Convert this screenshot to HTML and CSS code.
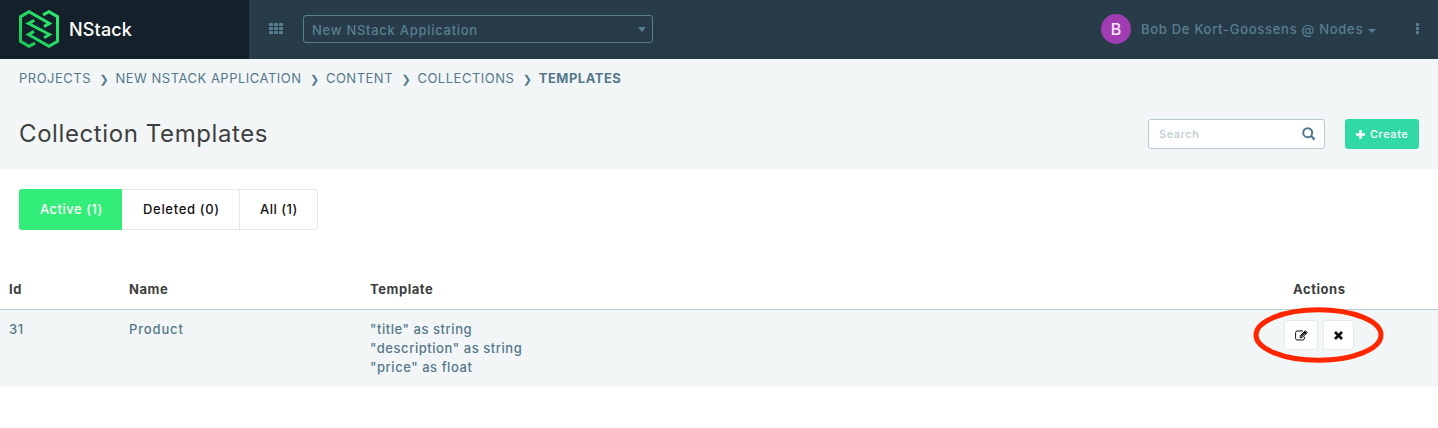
FILE: index.html
```html
<!DOCTYPE html>
<html lang="en">
<head>
<meta charset="utf-8">
<title>NStack - Collection Templates</title>
<link rel="stylesheet" href="styles.css">
</head>
<body>
<header class="topbar">
  <div class="brand">
    <svg class="logo" width="40" height="38" viewBox="0 0 40 38" fill="none" stroke="url(#g)" stroke-width="3">
      <defs><linearGradient id="g" gradientUnits="userSpaceOnUse" x1="40" y1="0" x2="0" y2="38"><stop offset="0" stop-color="#32ec75"/><stop offset="1" stop-color="#18c653"/></linearGradient></defs>
      <path d="M16 33.2L10 36.3L1.5 31.3V6.7L10 1.7L30.5 13.4L25 16.6"/>
      <path d="M24 4.8L30 1.7L38.5 6.7V31.3L30 36.3L9.5 24.6L15 21.4"/>
      <path d="M15.3 10.4L9.5 13.5L30.5 24.5L25 27.8"/>
    </svg>
    <span class="brand-name">NStack</span>
  </div>
  <svg class="grid-icon" width="14" height="11" viewBox="0 0 14 11" fill="#587f8f">
    <rect width="4" height="3" rx=".6"/><rect x="5" width="4" height="3" rx=".6"/><rect x="10" width="4" height="3" rx=".6"/>
    <rect y="4" width="4" height="3" rx=".6"/><rect x="5" y="4" width="4" height="3" rx=".6"/><rect x="10" y="4" width="4" height="3" rx=".6"/>
    <rect y="8" width="4" height="3" rx=".6"/><rect x="5" y="8" width="4" height="3" rx=".6"/><rect x="10" y="8" width="4" height="3" rx=".6"/>
  </svg>
  <div class="app-select"><span class="app-name">New NStack Application</span><i class="arrow"></i></div>
  <div class="user">
    <span class="avatar">B</span>
    <span class="user-name">Bob De Kort-Goossens @ Nodes</span>
    <i class="caret"></i>
    <svg class="dots" width="3" height="11" viewBox="0 0 3 11" fill="#587f8f"><rect width="3" height="3" rx=".5"/><rect y="4" width="3" height="3" rx=".5"/><rect y="8" width="3" height="3" rx=".5"/></svg>
  </div>
</header>
<section class="page-head">
  <nav class="crumbs">
    <span>PROJECTS</span><b>❯</b><span>NEW NSTACK APPLICATION</span><b>❯</b><span>CONTENT</span><b>❯</b><span>COLLECTIONS</span><b>❯</b><span class="current">TEMPLATES</span>
  </nav>
  <div class="title-row">
    <h1>Collection Templates</h1>
    <div class="search"><span>Search</span>
      <svg width="14" height="14" viewBox="0 0 14 14" fill="none" stroke="#55798a"><circle cx="5.7" cy="5.7" r="4.5" stroke-width="2"/><path d="M9 9L12.6 12.6" stroke-width="2.4"/></svg>
    </div>
    <button class="create"><svg width="9" height="9" viewBox="0 0 9 9"><path d="M4.5 0V9M0 4.5H9" stroke="#fff" stroke-width="2.4"/></svg><span>Create</span></button>
  </div>
</section>
<div class="tabs"><div class="tab active">Active (1)</div><div class="tab deleted">Deleted (0)</div><div class="tab all">All (1)</div></div>
<div class="table">
  <div class="row head"><div>Id</div><div>Name</div><div>Template</div><div class="actions-head">Actions</div></div>
  <div class="row item">
    <div>31</div><div class="product">Product</div>
    <div>"title" as string<br>"description" as string<br>"price" as float</div>
    <div class="actions">
      <button class="act edit"><svg width="13" height="11" viewBox="0 0 13 11" fill="none" stroke="#111"><path d="M8 1H2.2Q.6 1 .6 2.6V8.4Q.6 10 2.2 10H7.8Q9.4 10 9.4 8.4V6.8"/><path d="M5.2 7.7V5.8L10.3 .7L12.2 2.6L7.1 7.7Z"/><path d="M6.2 6.5L10.9 1.8M9.2 1.7L11.2 3.7" stroke-width="1.3"/></svg></button>
      <button class="act close"><svg width="9" height="9" viewBox="0 0 9 9"><path d="M1 1L8 8M8 1L1 8" stroke="#111" stroke-width="2.7"/></svg></button>
      <svg class="ring" width="132" height="58" viewBox="0 0 132 58"><ellipse cx="66.5" cy="29" rx="62.5" ry="25.2" fill="none" stroke="#ff2600" stroke-width="5"/></svg>
    </div>
  </div>
</div>
</body>
</html>
```
FILE: styles.css
```css
* { box-sizing: border-box; }
body { margin: 0; background: #fff; font: 500 13px/19px Inter, "Liberation Sans", sans-serif; letter-spacing: .55px; color: #55798a; overflow: hidden; white-space: nowrap; }
button { font: inherit; letter-spacing: inherit; padding: 0; }
svg { display: block; flex: none; }
.topbar { display: flex; height: 59px; background: #273b49; }
.brand { display: flex; width: 249px; background: #15212a; padding: 10px 0 0 19px; }
.brand-name { margin: 9px 0 0 10px; font-size: 18px; line-height: 22px; letter-spacing: .15px; color: #fff; }
.grid-icon { margin: 23px 0 0 20px; }
.app-select { display: flex; justify-content: space-between; width: 350px; height: 28px; margin: 15px 0 0 20px; padding: 5px 6px 0 8px; border: 1px solid #587f8f; border-radius: 3px; color: #587f8f; letter-spacing: .72px; }
.arrow { border: 4px solid transparent; border-top: 5px solid #587f8f; border-bottom: 0; margin-top: 6px; height: 5px; }
.user { display: flex; margin-left: auto; padding: 14px 19px 0 0; color: #587f8f; }
.avatar { width: 30px; height: 30px; border-radius: 50%; background: #a13db3; color: #f5e8f7; font-size: 16px; line-height: 30px; text-align: center; letter-spacing: 0; }
.user-name { margin: 6px 0 0 10px; width: 223px; letter-spacing: .72px; }
.caret { border: 4px solid transparent; border-top-color: #587f8f; border-bottom: 0; height: 4px; margin: 15px 0 0 4px; }
.dots { margin: 9px 0 0 40px; }
.page-head { height: 110px; background: #f2f6f7; padding: 10px 19px 0; }
.crumbs { display: flex; height: 19px; letter-spacing: .5px; font-weight: 400; }
.crumbs b { width: 24.4px; padding-left: 8.5px; font: 700 11px/21px "DejaVu Sans", sans-serif; }
.crumbs .current { font-weight: 700; }
.title-row { display: flex; margin-top: 31px; }
h1 { margin: 0 auto 0 0; font-size: 24px; line-height: 30px; font-weight: 400; color: #3d3f40; letter-spacing: .6px; }
.search { display: flex; justify-content: space-between; width: 177px; height: 30px; padding: 7px 8px 0 10px; border: 1px solid #b9cbd2; border-radius: 3px; background: #fff; color: #b9cbd2; font-size: 11px; line-height: 14px; letter-spacing: .6px; }
.create { display: flex; align-items: center; gap: 5px; width: 74px; height: 30px; margin-left: 20px; padding-left: 11px; border: 0; border-radius: 3px; background: #31d9a5; color: #fff; font-size: 11px; }
.tabs { display: flex; width: 299px; height: 41px; margin: 20px 0 0 19px; border-radius: 3px; border: 1px solid #e8e8e8; background: #fff; color: #111; line-height: 39px; }
.tab { padding-left: 20px; border-right: 1px solid #e8e8e8; }
.active { width: 103px; margin: -1px 0 -1px -1px; padding-left: 21px; line-height: 41px; background: #32ed78; border: 0; border-radius: 3px 0 0 3px; color: #fff; letter-spacing: .5px; }
.deleted { width: 118px; padding-left: 21px; letter-spacing: .68px; }
.all { border: 0; letter-spacing: .5px; }
.table { margin-top: 40px; }
.row { display: grid; grid-template-columns: 120px 241px 823px 1fr; padding-left: 9px; }
.head { height: 40px; padding-top: 10px; border-bottom: 1px solid #b9cbd2; font-weight: 700; color: #3d3f40; }
.actions-head { padding-left: 100px; }
.item { height: 77px; padding-top: 10px; background: #f2f6f7; }
.product { letter-spacing: .85px; }
.actions { position: relative; display: flex; gap: 5px; padding-left: 91px; }
.act { display: flex; align-items: center; justify-content: center; width: 34px; height: 30px; border: 1px solid #e4eaed; border-radius: 3px; background: #fff; }
.close { width: 31px; }
.ring { position: absolute; left: 59px; top: -14px; }
```
